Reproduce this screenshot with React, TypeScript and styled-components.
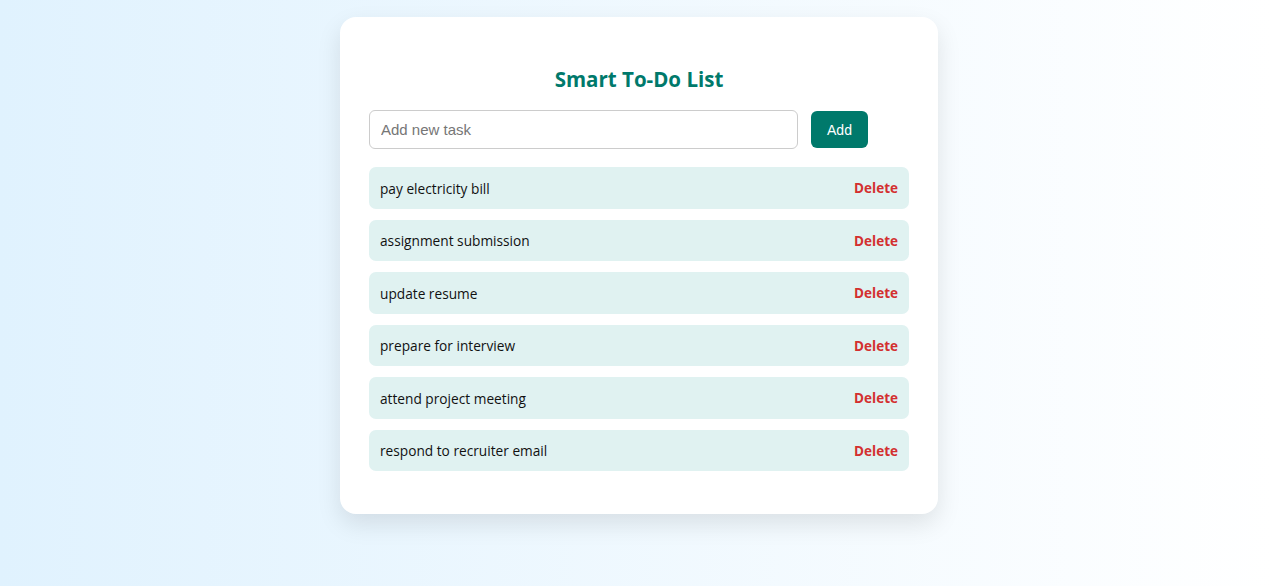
import React, { useState } from "react";
import styled, { createGlobalStyle } from "styled-components";

const GlobalStyle = createGlobalStyle`
  html, body {
    margin: 0;
    padding: 0;
    height: 100%;
  }
  body {
    font-family: "Open Sans", "Noto Sans", sans-serif;
    background: linear-gradient(to right, #e0f2fe, #ffffff);
    min-height: 586px;
  }
`;

const Page = styled.div`
  display: flex;
  justify-content: center;
  padding: 17px 0 0 6px;
`;

const Card = styled.div`
  width: 540px;
  background: #ffffff;
  border-radius: 16px;
  padding: 29px 29px 43px;
  box-shadow: 0 10px 25px rgba(0, 0, 0, 0.1);
`;

const Title = styled.h2`
  margin: 17px 0 15px;
  text-align: center;
  font-size: 20.5px;
  line-height: 32px;
  font-weight: 700;
  color: #00796b;
`;

const Form = styled.form`
  display: flex;
  align-items: center;
  gap: 13px;
  margin-bottom: 18px;
`;

const Input = styled.input`
  box-sizing: border-box;
  width: 429px;
  height: 39px;
  padding: 0 11px;
  border: 1px solid #ccc;
  border-radius: 6px;
  font-family: "Liberation Sans", Arial, sans-serif;
  font-size: 15px;
  color: #222;
  outline: none;
  &::placeholder {
    color: #767676;
  }
`;

const AddButton = styled.button`
  height: 37px;
  width: 57px;
  border: none;
  border-radius: 6px;
  background: #00796b;
  color: #ffffff;
  font-family: "Liberation Sans", Arial, sans-serif;
  font-size: 14px;
  cursor: pointer;
`;

const List = styled.ul`
  list-style: none;
  margin: 0;
  padding: 0;
  display: flex;
  flex-direction: column;
  gap: 11px;
`;

const Item = styled.li`
  display: flex;
  justify-content: space-between;
  align-items: center;
  height: 41.5px;
  padding: 1px 11px 0;
  box-sizing: border-box;
  background: #e0f2f1;
  border-radius: 7px;
  font-size: 13.7px;
  color: #111;
`;

const DeleteButton = styled.button`
  border: none;
  background: none;
  padding: 0;
  color: #d32f2f;
  font-family: "Open Sans", "Noto Sans", sans-serif;
  font-weight: 700;
  font-size: 13.5px;
  cursor: pointer;
`;

const initialTasks = [
  "pay electricity bill",
  "assignment submission",
  "update resume",
  "prepare for interview",
  "attend project meeting",
  "respond to recruiter email",
];

export default function App() {
  const [tasks, setTasks] = useState(initialTasks);
  const [text, setText] = useState("");

  const addTask = (e: React.FormEvent) => {
    e.preventDefault();
    if (!text.trim()) return;
    setTasks([...tasks, text.trim()]);
    setText("");
  };

  return (
    <>
      <GlobalStyle />
      <Page>
        <Card>
          <Title>Smart To-Do List</Title>
          <Form onSubmit={addTask}>
            <Input
              placeholder="Add new task"
              value={text}
              onChange={(e) => setText(e.target.value)}
            />
            <AddButton type="submit">Add</AddButton>
          </Form>
          <List>
            {tasks.map((t, i) => (
              <Item key={i}>
                <span>{t}</span>
                <DeleteButton
                  onClick={() => setTasks(tasks.filter((_, j) => j !== i))}
                >
                  Delete
                </DeleteButton>
              </Item>
            ))}
          </List>
        </Card>
      </Page>
    </>
  );
}
